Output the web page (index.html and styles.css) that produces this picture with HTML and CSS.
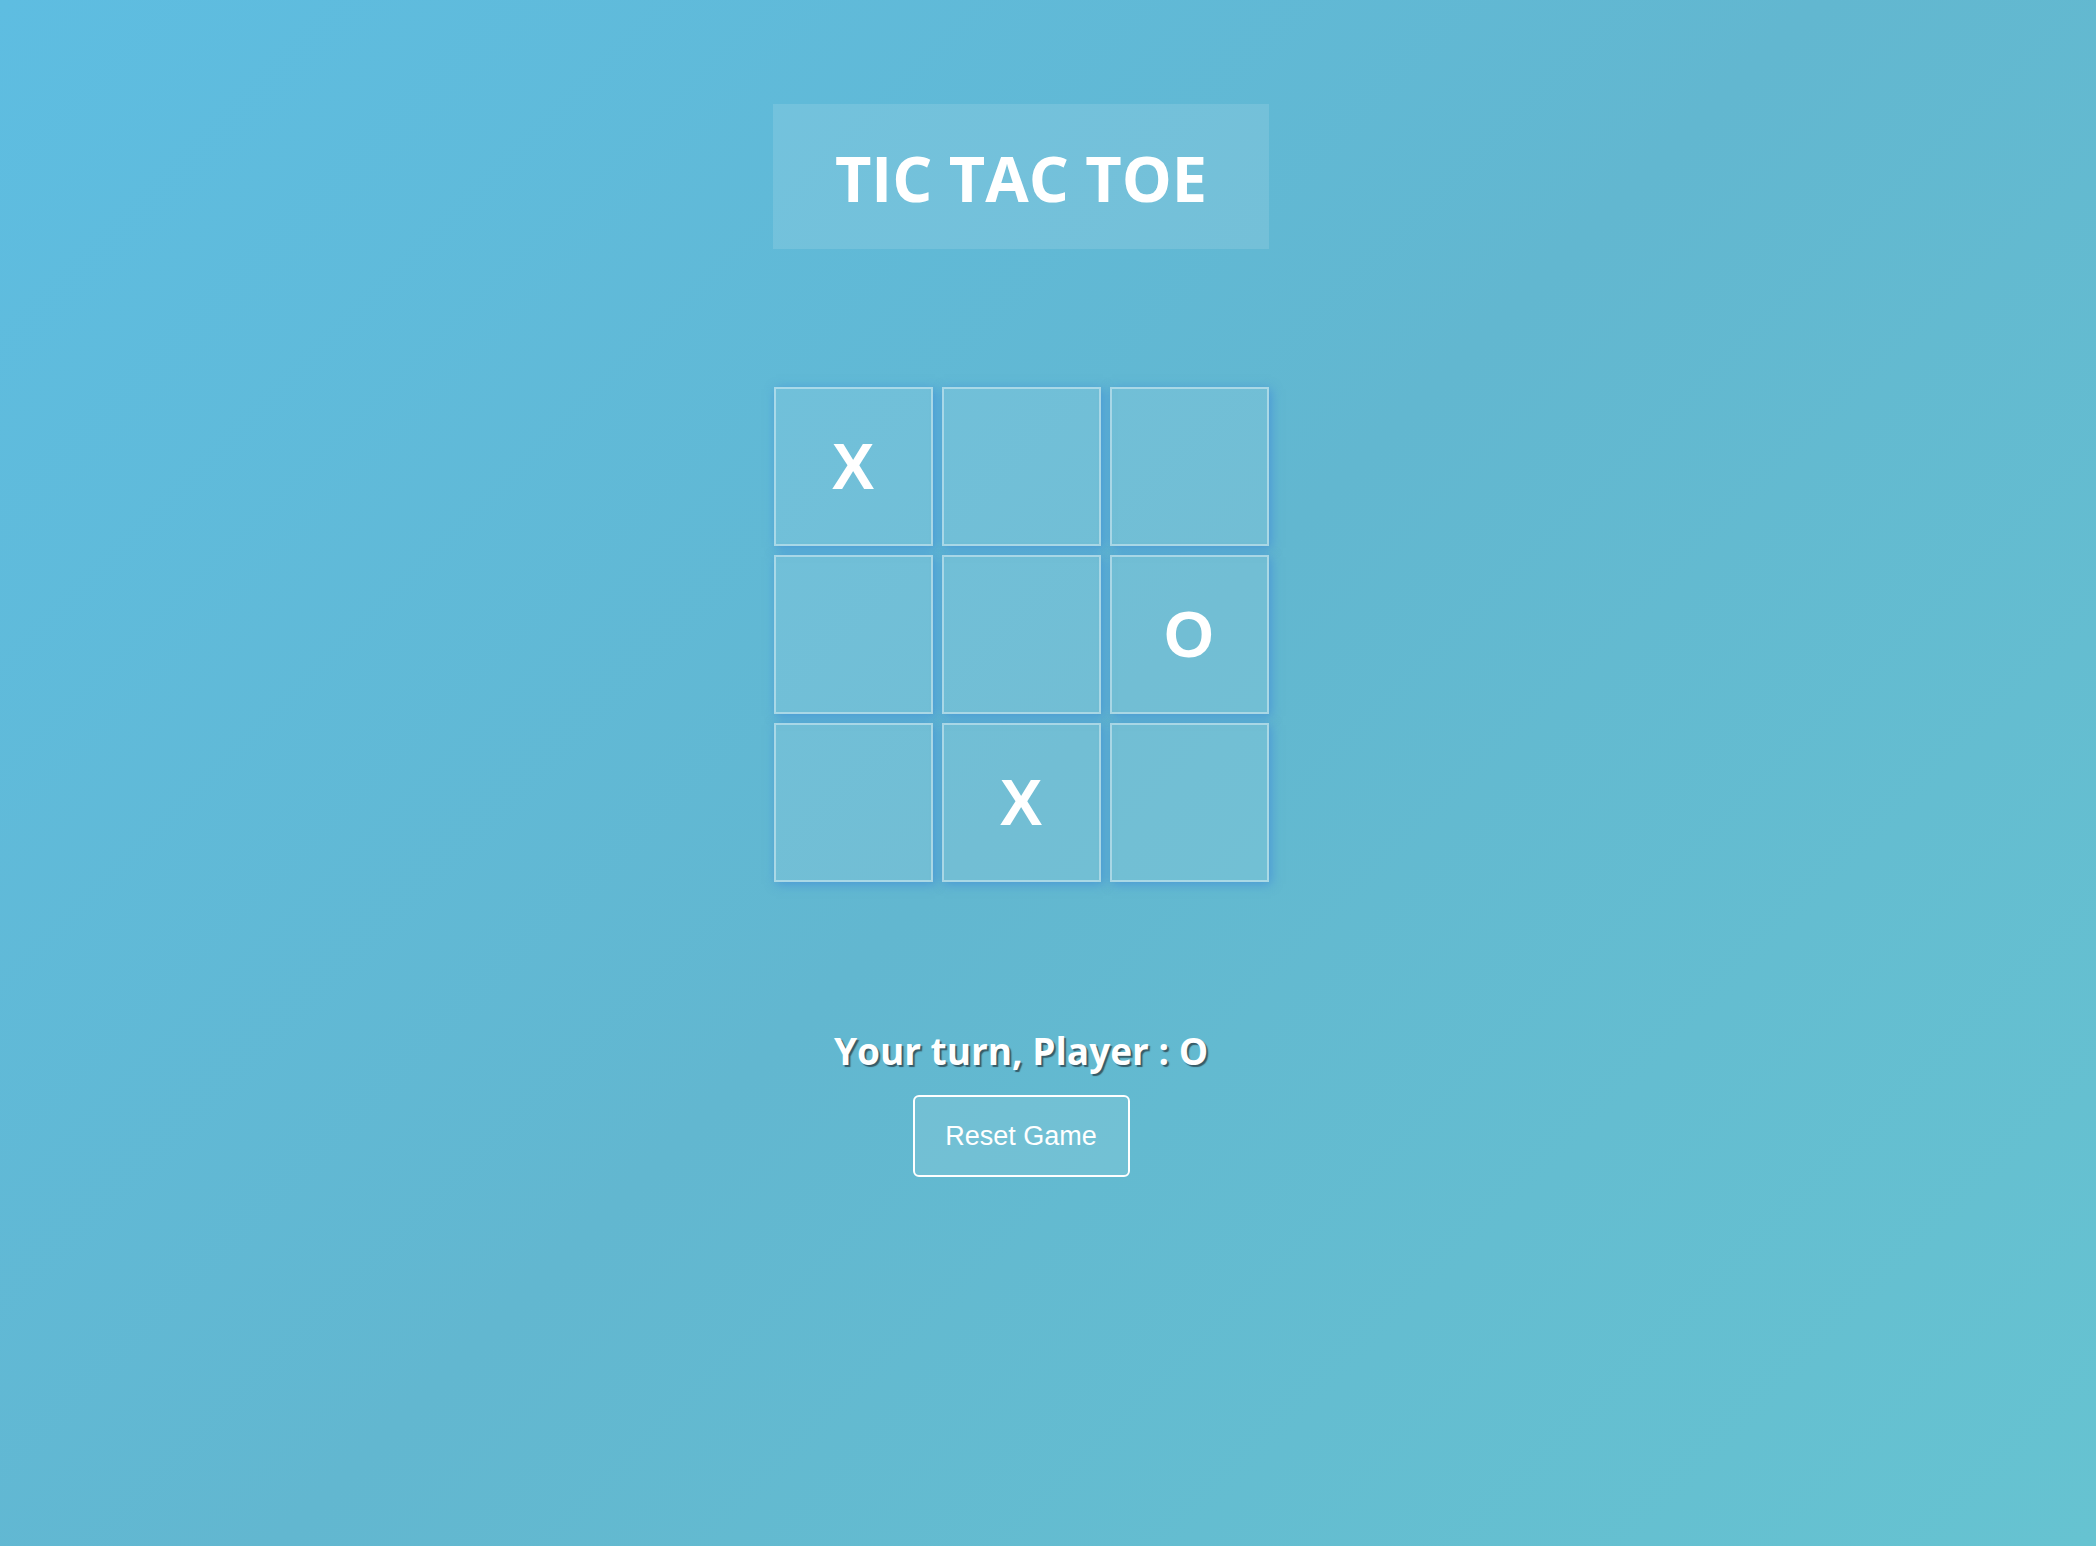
FILE: index.html
```html
<!DOCTYPE html>
<html>
<head>
<meta charset="utf-8">
<title>Tic Tac Toe</title>
<link rel="stylesheet" href="styles.css">
</head>
<body>
<main class="game">
  <h1 class="title">TIC TAC TOE</h1>
  <div class="board">
    <div class="cell">X</div>
    <div class="cell"></div>
    <div class="cell"></div>
    <div class="cell"></div>
    <div class="cell"></div>
    <div class="cell">O</div>
    <div class="cell"></div>
    <div class="cell">X</div>
    <div class="cell"></div>
  </div>
  <p class="status">Your turn, Player : O</p>
  <button class="reset">Reset Game</button>
</main>
</body>
</html>
```
FILE: styles.css
```css
html, body {
  margin: 0;
  height: 100%;
}
body {
  background: linear-gradient(135deg, #5ebde1 0%, #62b7d0 50%, #66c3d1 100%);
  font-family: "Open Sans", "Noto Sans", sans-serif;
  color: #fff;
}
.game {
  display: flex;
  flex-direction: column;
  align-items: center;
  padding-top: 104px;
  padding-right: 54px;
}
.title {
  margin: 0;
  width: 496px;
  height: 145px;
  display: flex;
  align-items: center;
  justify-content: center;
  background: rgba(255, 255, 255, 0.12);
  font-size: 63px;
  font-weight: 700;
  padding-top: 1px;
  box-sizing: border-box;
}
.board {
  margin-top: 138px;
  display: grid;
  grid-template-columns: repeat(3, 159px);
  grid-template-rows: repeat(3, 159px);
  gap: 9px;
}
.cell {
  box-sizing: border-box;
  border: 2px solid rgba(255, 255, 255, 0.4);
  background: rgba(255, 255, 255, 0.1);
  box-shadow: 2px 2px 10px rgba(50, 120, 220, 0.5);
  display: flex;
  align-items: center;
  justify-content: center;
  font-family: "Liberation Sans", Arial, sans-serif;
  font-weight: 700;
  font-size: 64px;
  color: #fff;
}
.status {
  margin: 142px 0 0;
  font-size: 37px;
  font-weight: 700;
  line-height: 54px;
  text-shadow: 2px 2px 1px rgba(40, 60, 70, 0.75);
}
.reset {
  margin-top: 17px;
  width: 217px;
  height: 82px;
  box-sizing: border-box;
  border: 2px solid #fff;
  border-radius: 6px;
  background: rgba(255, 255, 255, 0.1);
  color: #fff;
  font-family: "Liberation Sans", Arial, sans-serif;
  font-size: 27px;
  cursor: pointer;
}
```
